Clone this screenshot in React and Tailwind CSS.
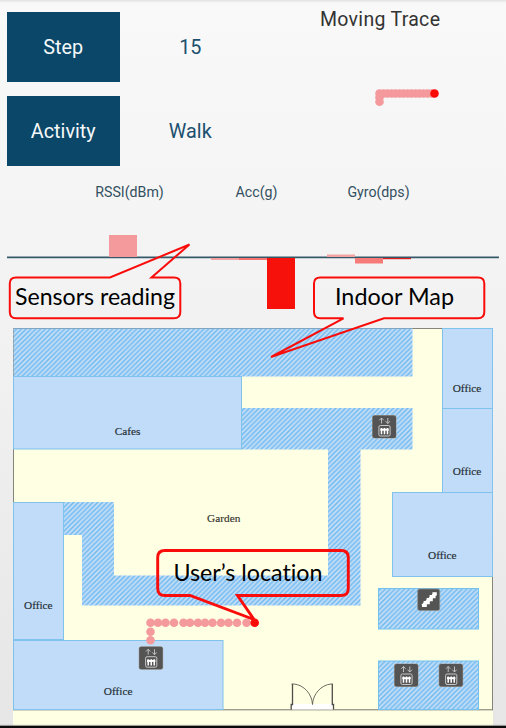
const STRIPE = "url(#corridor)";

const liveTrace = Array.from({ length: 14 }, (_, i) => 379.5 + i * 4);
const mapTrace = [150.5, 158, 165.5, 174, 183.5, 190, 198, 205, 212.5, 221, 228.5, 237, 246.5];

const bars = [
  { x: 109, y: 235, h: 22, fill: "#f49a9c" },
  { x: 211, y: 258, h: 2, fill: "#f4a3a3" },
  { x: 239, y: 258, h: 2, fill: "#f7736f" },
  { x: 267, y: 258, h: 51, fill: "#f6110b" },
  { x: 327, y: 254.5, h: 2.5, fill: "#f4a3a3" },
  { x: 355, y: 258, h: 5.5, fill: "#f77b78" },
  { x: 383, y: 258, h: 1.2, fill: "#e01c1c" },
];

const rooms = [
  { x: 13.5, y: 376.5, w: 228, h: 72.5, label: "Cafes", lx: 127.5, ly: 434.7 },
  { x: 442.5, y: 328.5, w: 50, h: 80, label: "Office", lx: 467, ly: 391.7 },
  { x: 442.5, y: 408.5, w: 50, h: 84, label: "Office", lx: 467, ly: 474.7 },
  { x: 392.5, y: 492.5, w: 100, h: 84, label: "Office", lx: 442.3, ly: 558.7 },
  { x: 13.5, y: 502.5, w: 50, h: 137, label: "Office", lx: 38.3, ly: 608.7 },
  { x: 13.5, y: 640.5, w: 209.5, h: 69, label: "Office", lx: 118.2, ly: 695.3 },
];

function Tile({ label }) {
  return (
    <div className="flex h-[70px] w-[112.5px] items-center justify-center bg-[#0b4768] pt-[3px] text-[19.8px] text-[#f5f8fa]">
      {label}
    </div>
  );
}

function Reading({ label, value }) {
  return (
    <div className="flex">
      <Tile label={label} />
      <div className="flex w-[141.5px] items-center justify-center pt-[3px] text-[19.8px] text-[#1c506e]">{value}</div>
    </div>
  );
}

function Elevator({ x, y }) {
  return (
    <g transform={`translate(${x} ${y})`}>
      <rect x="-0.5" y="-0.5" width="24.5" height="23.5" rx="2.5" fill="#a7a49e" />
      <rect width="23.5" height="22.5" rx="2" fill="#555454" />
      <path d="M9 8V2.5M6.8 4.8L9 2.5l2.2 2.3M15.3 2.5V8M13.1 5.7L15.3 8l2.2-2.3" fill="none" stroke="#c9c9c9" strokeWidth="0.9" />
      <rect x="6.4" y="10" width="11.2" height="10.5" rx="1.5" fill="none" stroke="#d4d4d4" strokeWidth="0.9" />
      <path d="M7.8 14.2h8.4" fill="none" stroke="#fff" strokeWidth="2" />
      <path d="M9 12.5v6.2M12 12.5v6.2M15 12.5v6.2" fill="none" stroke="#fff" strokeWidth="1.5" />
    </g>
  );
}

function FloorPlan() {
  return (
    <svg className="block h-[408px] w-full shrink-0" viewBox="0 320 506 408">
      <defs>
        <pattern id="corridor" width="4.8" height="4.8" patternUnits="userSpaceOnUse">
          <rect width="4.8" height="4.8" fill="#c2def7" />
          <path d="M-1.2 1.2L1.2 -1.2M0 4.8L4.8 0M3.6 6L6 3.6" stroke="#70b9f0" strokeWidth="1.5" />
        </pattern>
      </defs>
      <rect x="13" y="328" width="480" height="398" fill="#ffffe4" />
      <path d="M13.5 710V328.5H492.5V710" fill="none" stroke="#85857c" />
      <path d="M13 709.8H493" stroke="#77776c" />
      <g fill={STRIPE}>
        <rect x="13.5" y="329" width="399" height="47.5" />
        <path d="M241.5 408H412.5v41.5H360.5V605.5H82V535H63V502H114V575.5H328V449.5H241.5z" />
        <rect x="378.5" y="588.5" width="100" height="40.5" stroke="#73c1ef" />
        <rect x="378.5" y="661" width="100" height="48.5" stroke="#73c1ef" />
      </g>
      <path d="M13 328.5H413" stroke="#82a5c0" />
      {rooms.map((r) => (
        <g key={`${r.x}-${r.y}`}>
          <rect x={r.x} y={r.y} width={r.w} height={r.h} fill="#c0dcf8" stroke="#7fc2ee" />
          <text x={r.lx} y={r.ly} textAnchor="middle" fontSize="11.3" fill="#252c33" stroke="#252c33" strokeWidth="0.15" className="font-['Liberation_Serif',serif]">
            {r.label}
          </text>
        </g>
      ))}
      <text x="223.7" y="522.3" textAnchor="middle" fontSize="11.3" fill="#33332d" stroke="#33332d" strokeWidth="0.15" className="font-['Liberation_Serif',serif]">
        Garden
      </text>
      <rect x="292" y="704" width="41" height="5.5" fill="#fff" />
      <path d="M291.2 709.5V704.5H292.5V684M333.5 709.5V704.5H332.3V684" fill="none" stroke="#4d4d49" strokeWidth="1.3" />
      <path d="M291.5 684H294C304 685 312 694 312.5 704.5C313 694 321 685 331 684H333" fill="none" stroke="#5c5c55" strokeWidth="0.9" />
      <Elevator x={372.5} y={415.5} />
      <Elevator x={139.2} y={646.7} />
      <Elevator x={394.5} y={664} />
      <Elevator x={439.2} y={664} />
      <rect x="417.7" y="589" width="22" height="21.5" rx="2" fill="#555454" stroke="#8d8d86" strokeWidth="0.7" />
      <path d="M422 605.5h3.2v-2.9h3v-3h3v-3h2.8v-2.8h2.8" fill="none" stroke="#fff" strokeWidth="3.2" />
      <path d="M422.5 605.8L435.5 593.5" stroke="#fff" strokeWidth="3.2" />
      <g fill="#f4999c">
        <circle cx="150.5" cy="640.3" r="4.3" />
        <circle cx="150.5" cy="631.8" r="4.3" />
        {mapTrace.map((x) => (
          <circle key={x} cx={x} cy="622.8" r="4.3" />
        ))}
      </g>
      <circle cx="254.7" cy="622.8" r="4.3" fill="#fb0b08" />
      <path d="M0 725.4H506" stroke="#777" strokeWidth="0.8" />
      <rect y="726" width="506" height="2" fill="#0a0a0a" />
    </svg>
  );
}

function Callouts() {
  return (
    <svg className="absolute inset-0 h-[728px] w-[506px]" viewBox="0 0 506 728">
      <g fill="none" stroke="#f90c0a" strokeWidth="2">
        <path d="M16 277.5H110L189.5 244.5L151.5 277.5H174Q180.3 277.5 180.3 283.5V312Q180.3 318.3 174 318.3H16Q9.8 318.3 9.8 312V283.5Q9.8 277.5 16 277.5z" />
        <path d="M320.3 277.5H478Q484.3 277.5 484.3 283.5V312Q484.3 318.3 478 318.3H384L271 357L343.5 318.3H320.3Q314 318.3 314 312V283.5Q314 277.5 320.3 277.5z" />
        <path strokeWidth="2.9" d="M165 550.5H341Q348.3 550.5 348.3 557.5V588.5Q348.3 595.5 341 595.5H237.5L254 619.5L190 595.5H165Q157.7 595.5 157.7 588.5V557.5Q157.7 550.5 165 550.5z" />
      </g>
      <g fill="#000" className="font-[Lato,sans-serif] [font-variant-ligatures:none]">
        <text x="15" y="305" fontSize="23" textLength="160" lengthAdjust="spacingAndGlyphs">Sensors reading</text>
        <text x="335" y="305" fontSize="23" textLength="119" lengthAdjust="spacingAndGlyphs">Indoor Map</text>
        <text x="173.5" y="580.7" fontSize="23" textLength="149" lengthAdjust="spacingAndGlyphs">User’s location</text>
      </g>
    </svg>
  );
}

export default function App() {
  return (
    <div className="relative flex h-[728px] w-[506px] flex-col overflow-hidden bg-linear-to-b from-[#f9f9f9] via-[#f1f1f1] to-[#e6e6e6] font-[Roboto,sans-serif]">
      <div className="h-[3px] w-full shrink-0 bg-linear-to-b from-[#e2e2e2] to-[#f9f9f9]" />
      <header className="flex h-[175px] shrink-0">
        <div className="flex w-[261px] flex-col gap-3.5 pt-[8.6px] pl-[7px]">
          <Reading label="Step" value="15" />
          <Reading label="Activity" value="Walk" />
        </div>
        <div className="flex w-[245px] flex-col">
          <h1 className="h-[30px] pt-[3px] pl-[59px] text-[19.5px] leading-7 tracking-[0.3px] text-[#333]">Moving Trace</h1>
          <svg className="h-[130px] w-[245px]" viewBox="261 33 245 130">
            <g fill="#f4999c">
              <circle cx="379.5" cy="101.7" r="4.3" />
              <circle cx="379.5" cy="97.5" r="4.3" />
              {liveTrace.map((x) => (
                <circle key={x} cx={x} cy="93.5" r="4.3" />
              ))}
            </g>
            <circle cx="434.5" cy="93.5" r="4.3" fill="#fb0b08" />
          </svg>
        </div>
      </header>
      <section className="flex h-[142px] shrink-0 flex-col">
        <div className="flex h-7 items-center pt-0.5 pl-[59px] text-center text-[14.2px] text-[#33505f]">
          <span className="w-[141px]">RSSI(dBm)</span>
          <span className="w-[113px]">Acc(g)</span>
          <span className="w-[131px]">Gyro(dps)</span>
        </div>
        <svg className="h-[114px] w-full" viewBox="0 206 506 114">
          <path d="M7 257.3H499" stroke="#36596a" strokeWidth="1.7" />
          {bars.map((b) => (
            <rect key={b.x} x={b.x} y={b.y} width="28" height={b.h} fill={b.fill} />
          ))}
        </svg>
      </section>
      <FloorPlan />
      <Callouts />
    </div>
  );
}
